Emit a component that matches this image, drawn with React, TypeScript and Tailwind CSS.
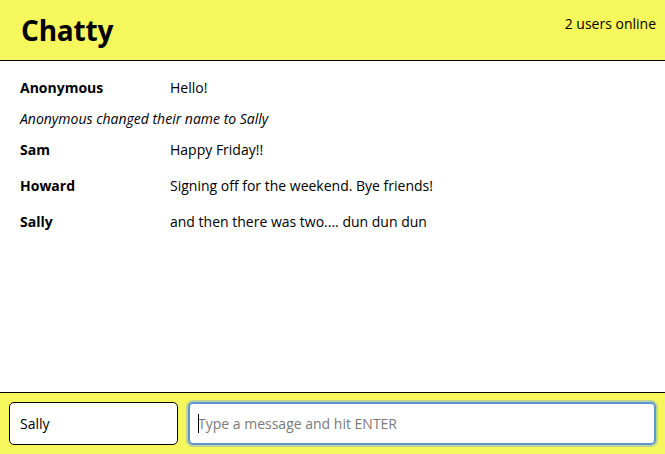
import React from "react";

const messages = [
  { kind: "msg", user: "Anonymous", text: "Hello!", h: "h-[31px]" },
  { kind: "sys", text: "Anonymous changed their name to Sally", h: "h-[31px]" },
  { kind: "msg", user: "Sam", text: "Happy Friday!!", h: "h-[31px]" },
  { kind: "msg", user: "Howard", text: "Signing off for the weekend. Bye friends!", h: "h-[41px]" },
  { kind: "msg", user: "Sally", text: "and then there was two.... dun dun dun", h: "h-[31px]" },
];

export default function App() {
  return (
    <div
      className="flex flex-col h-screen w-full bg-white text-black"
      style={{ fontFamily: '"Open Sans", "Liberation Sans", sans-serif' }}
    >
      <nav className="h-[61px] shrink-0 bg-[#f6f65d] border-b border-black flex items-start justify-between pl-[21px] pr-[9px]">
        <h1 className="text-[28px] font-bold leading-none mt-[16px] tracking-[-0.2px]">Chatty</h1>
        <span className="text-[14px] mt-[13px]">2 users online</span>
      </nav>

      <main className="flex-1 pt-[11px] px-[20px] text-[14px]">
        {messages.map((m, i) =>
          m.kind === "sys" ? (
            <div key={i} className={`${m.h} flex items-center italic`}>
              {m.text}
            </div>
          ) : (
            <div key={i} className={`${m.h} flex items-center`}>
              <span className="w-[150px] font-bold">{m.user}</span>
              <span>{m.text}</span>
            </div>
          )
        )}
      </main>

      <footer className="h-[62px] shrink-0 bg-[#f6f65d] border-t border-black flex items-start gap-[10px] pt-[9px] px-[9px]">
        <input
          defaultValue="Sally"
          className="w-[169px] h-[43px] shrink-0 rounded-[5px] border border-black bg-white pl-[10px] text-[14px] outline-none"
        />
        <div className="relative flex-1 flex">
          <input
            placeholder="Type a message and hit ENTER"
            autoFocus
            className="flex-1 h-[43px] rounded-[5px] border-2 border-[#5e97d0] bg-white pl-[8px] text-[14px] outline-none shadow-[0_0_0_2px_rgba(120,170,220,0.45)] placeholder:text-[#7a7a7a] caret-transparent"
          />
          <span className="absolute left-[10px] top-[12px] h-[19px] w-px bg-black pointer-events-none" />
        </div>
      </footer>
    </div>
  );
}
